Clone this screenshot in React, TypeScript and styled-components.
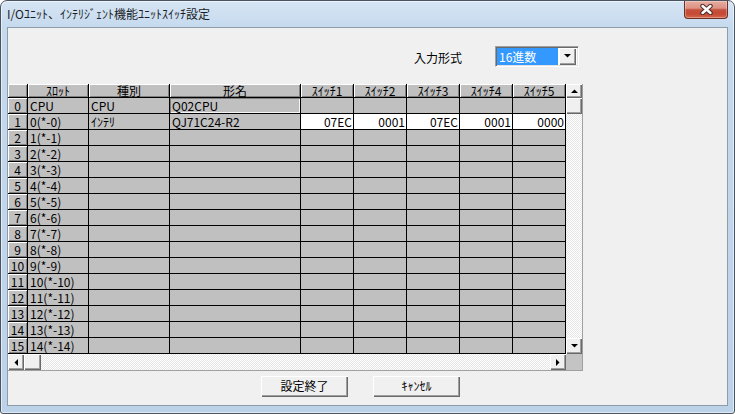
import React from 'react';
import styled, { createGlobalStyle, css } from 'styled-components';

const GlobalStyle = createGlobalStyle`
  html, body {
    margin: 0;
    padding: 0;
    background: #fff;
  }
  body {
    font-family: "Noto Sans CJK JP", "Noto Sans", sans-serif;
  }
`;

const raised = css`
  background: #f0f0f0;
  box-shadow: inset 1px 1px #fff, inset -1px -1px #696969, inset -2px -2px #a0a0a0;
`;

const checker = css`
  background: repeating-conic-gradient(#fff 0% 25%, #e6e6e6 0% 50%) 0 0 / 2px 2px;
`;

type Dir = 'up' | 'down' | 'left' | 'right';

const Arrow = ({ dir }: { dir: Dir }) => {
  const vertical = dir === 'up' || dir === 'down';
  const pts = {
    up: '0,4 7,4 3.5,0.5',
    down: '0,0 7,0 3.5,3.5',
    left: '4,0 4,7 0.5,3.5',
    right: '0,0 0,7 3.5,3.5',
  }[dir];
  return (
    <svg width={vertical ? 7 : 4} height={vertical ? 4 : 7} viewBox={vertical ? '0 0 7 4' : '0 0 4 7'}>
      <polygon points={pts} fill="#000" />
    </svg>
  );
};

const CloseGlyph = () => (
  <svg width="15" height="11" viewBox="0 0 15 11">
    <path d="M3.5 2 L11.5 9 M11.5 2 L3.5 9" stroke="#4b2c2a" strokeWidth="4.4" strokeLinecap="round" />
    <path d="M3.5 2 L11.5 9 M11.5 2 L3.5 9" stroke="#fff" strokeWidth="2.4" strokeLinecap="round" />
  </svg>
);

const headers = ['ｽﾛｯﾄ', '種別', '形名', 'ｽｲｯﾁ1', 'ｽｲｯﾁ2', 'ｽｲｯﾁ3', 'ｽｲｯﾁ4', 'ｽｲｯﾁ5'];

type Row = { slot: string; kind: string; model: string; sw: string[] };

const rows: Row[] = Array.from({ length: 16 }, (_, i) => {
  if (i === 0) return { slot: 'CPU', kind: 'CPU', model: 'Q02CPU', sw: ['', '', '', '', ''] };
  if (i === 1) return { slot: '0(*-0)', kind: 'ｲﾝﾃﾘ', model: 'QJ71C24-R2', sw: ['07EC', '0001', '07EC', '0001', '0000'] };
  return { slot: `${i - 1}(*-${i - 1})`, kind: '', model: '', sw: ['', '', '', '', ''] };
});

export default function App() {
  return (
    <>
      <GlobalStyle />
      <Window>
        <TitleBar>
          <Title>I/Oﾕﾆｯﾄ、ｲﾝﾃﾘｼﾞｪﾝﾄ機能ﾕﾆｯﾄｽｲｯﾁ設定</Title>
          <CloseBtn>
            <CloseGlyph />
          </CloseBtn>
        </TitleBar>
        <Client>
          <TopRow>
            <Label>入力形式</Label>
            <Combo>
              <ComboValue>16進数</ComboValue>
              <ComboBtn>
                <Arrow dir="down" />
              </ComboBtn>
            </Combo>
          </TopRow>

          <Grid>
            <HeadCell />
            {headers.map((h) => (
              <HeadCell key={h}>{h}</HeadCell>
            ))}
            <VScroll>
              <ScrollBtn $h={14}>
                <Arrow dir="up" />
              </ScrollBtn>
              <Thumb $h={16} />
              <Track />
              <ScrollBtn $h={16}>
                <Arrow dir="down" />
              </ScrollBtn>
            </VScroll>

            {rows.map((r, i) => (
              <React.Fragment key={i}>
                <RowHead>{i}</RowHead>
                <Cell>{r.slot}</Cell>
                <Cell>{r.kind}</Cell>
                <Cell $focus={i === 0}>{r.model}</Cell>
                {r.sw.map((v, j) => (
                  <Cell key={j} $white={i === 1} $right>
                    {v}
                  </Cell>
                ))}
              </React.Fragment>
            ))}

            <HScroll>
              <ScrollBtn $w={16}>
                <Arrow dir="left" />
              </ScrollBtn>
              <Thumb $w={17} />
              <Track />
              <ScrollBtn $w={16}>
                <Arrow dir="right" />
              </ScrollBtn>
            </HScroll>
            <Corner />
          </Grid>

          <ButtonRow>
            <Button>設定終了</Button>
            <Button>ｷｬﾝｾﾙ</Button>
          </ButtonRow>
        </Client>
      </Window>
    </>
  );
}

const Window = styled.div`
  width: 735px;
  height: 414px;
  box-sizing: border-box;
  border: 1px solid #4b5561;
  border-radius: 7px 7px 3px 3px;
  background: linear-gradient(180deg, #d6e5f4 0px, #c6daee 26px, #bcd2e9 100%);
  box-shadow: inset 0 0 0 1px rgba(255, 255, 255, 0.55);
  display: flex;
  flex-direction: column;
  overflow: hidden;
`;

const TitleBar = styled.div`
  height: 26px;
  flex-shrink: 0;
  display: flex;
  align-items: flex-start;
  justify-content: space-between;
  padding: 0 6px 0 6px;
`;

const Title = styled.div`
  margin-top: 5px;
  font-size: 12px;
  line-height: 16px;
  color: #1a1e26;
  white-space: nowrap;
`;

const CloseBtn = styled.div`
  width: 44px;
  height: 18px;
  box-sizing: border-box;
  border: 1px solid #6a2f26;
  border-top: none;
  border-radius: 0 0 4px 4px;
  background: linear-gradient(180deg, #e7ada1 0%, #dc9284 42%, #c6503c 52%, #c44a33 75%, #d8664a 100%);
  box-shadow: inset 0 0 0 1px rgba(255, 255, 255, 0.3);
  display: flex;
  align-items: center;
  justify-content: center;
`;

const Client = styled.div`
  flex: 1;
  margin: 0 6px 7px 6px;
  border: 1px solid #8d9bab;
  background: #f0f0f0;
  display: flex;
  flex-direction: column;
`;

const TopRow = styled.div`
  width: 575px;
  height: 56px;
  box-sizing: border-box;
  padding-right: 4px;
  display: flex;
  align-items: center;
  justify-content: flex-end;
  gap: 33px;
`;

const Label = styled.span`
  font-size: 12px;
  line-height: 16px;
  padding-top: 4px;
  color: #000;
`;

const Combo = styled.div`
  width: 84px;
  height: 21px;
  box-sizing: border-box;
  border: 1px solid;
  border-color: #a0a0a0 #fff #fff #a0a0a0;
  box-shadow: inset 1px 1px #696969, inset -1px -1px #e3e3e3;
  background: #fff;
  padding: 1px 2px 1px 1px;
  display: flex;
  gap: 1px;
`;

const ComboValue = styled.div`
  flex: 1;
  background: #3399ff;
  color: #fff;
  font-size: 12px;
  line-height: 17px;
  padding-left: 2px;
  white-space: nowrap;
`;

const ComboBtn = styled.div`
  width: 17px;
  ${raised};
  display: flex;
  align-items: center;
  justify-content: center;
`;

const Grid = styled.div`
  width: 575px;
  box-sizing: border-box;
  border-right: 1px solid #a0a0a0;
  border-bottom: 1px solid #a0a0a0;
  display: grid;
  grid-template-columns: 20px 61px 81px 131px 53px 53px 53px 53px 53px 16px;
  grid-template-rows: 14px repeat(16, 16px) 16px;
  background: #c0c0c0;
`;

const HeadCell = styled.div`
  box-sizing: border-box;
  background: #c0c0c0;
  border-right: 1px solid #000;
  border-bottom: 1px solid #000;
  box-shadow: inset 1px 1px #fff, inset -1px -1px #808080;
  font-family: "Noto Sans CJK JP", sans-serif;
  font-size: 12px;
  line-height: 13px;
  text-align: center;
  white-space: nowrap;
  color: #000;
`;

const RowHead = styled.div`
  box-sizing: border-box;
  background: #c0c0c0;
  border-right: 1px solid #000;
  border-bottom: 1px solid #000;
  box-shadow: inset 1px 1px #fff, inset -1px -1px #808080;
  font-family: "Noto Sans CJK JP", sans-serif;
  font-size: 12px;
  line-height: 15px;
  text-align: center;
  color: #000;
`;

const Cell = styled.div<{ $white?: boolean; $right?: boolean; $focus?: boolean }>`
  box-sizing: border-box;
  background: ${(p) => (p.$white ? '#fff' : '#c0c0c0')};
  border-right: 1px solid #000;
  border-bottom: 1px solid #000;
  font-family: "Noto Sans CJK JP", sans-serif;
  font-size: 12px;
  line-height: 15px;
  padding: ${(p) => (p.$right ? '0 1px 0 0' : '0 0 0 2px')};
  text-align: ${(p) => (p.$right ? 'right' : 'left')};
  white-space: nowrap;
  overflow: hidden;
  color: #000;
  ${(p) =>
    p.$focus &&
    css`
      box-shadow: inset 1px 1px #808080, inset -1px -1px #f4f4f4;
    `}
`;

const VScroll = styled.div`
  grid-column: 10;
  grid-row: 1 / span 17;
  display: flex;
  flex-direction: column;
`;

const HScroll = styled.div`
  grid-column: 1 / span 9;
  grid-row: 18;
  display: flex;
`;

const Corner = styled.div`
  grid-column: 10;
  grid-row: 18;
  background: #c4c4c4;
`;

const ScrollBtn = styled.div<{ $w?: number; $h?: number }>`
  flex-shrink: 0;
  width: ${(p) => (p.$w ? `${p.$w}px` : 'auto')};
  height: ${(p) => (p.$h ? `${p.$h}px` : 'auto')};
  ${raised};
  display: flex;
  align-items: center;
  justify-content: center;
`;

const Thumb = styled.div<{ $w?: number; $h?: number }>`
  flex-shrink: 0;
  width: ${(p) => (p.$w ? `${p.$w}px` : 'auto')};
  height: ${(p) => (p.$h ? `${p.$h}px` : 'auto')};
  ${raised};
`;

const Track = styled.div`
  flex: 1;
  ${checker};
`;

const ButtonRow = styled.div`
  margin-top: 5px;
  padding-right: 14px;
  display: flex;
  justify-content: center;
  gap: 25px;
`;

const Button = styled.div`
  width: 87px;
  height: 21px;
  box-sizing: border-box;
  background: #f0f0f0;
  box-shadow: inset 1px 1px #fff, inset -1px -1px #696969, inset -2px -2px #a0a0a0;
  font-size: 12px;
  line-height: 20px;
  text-align: center;
  color: #000;
`;
